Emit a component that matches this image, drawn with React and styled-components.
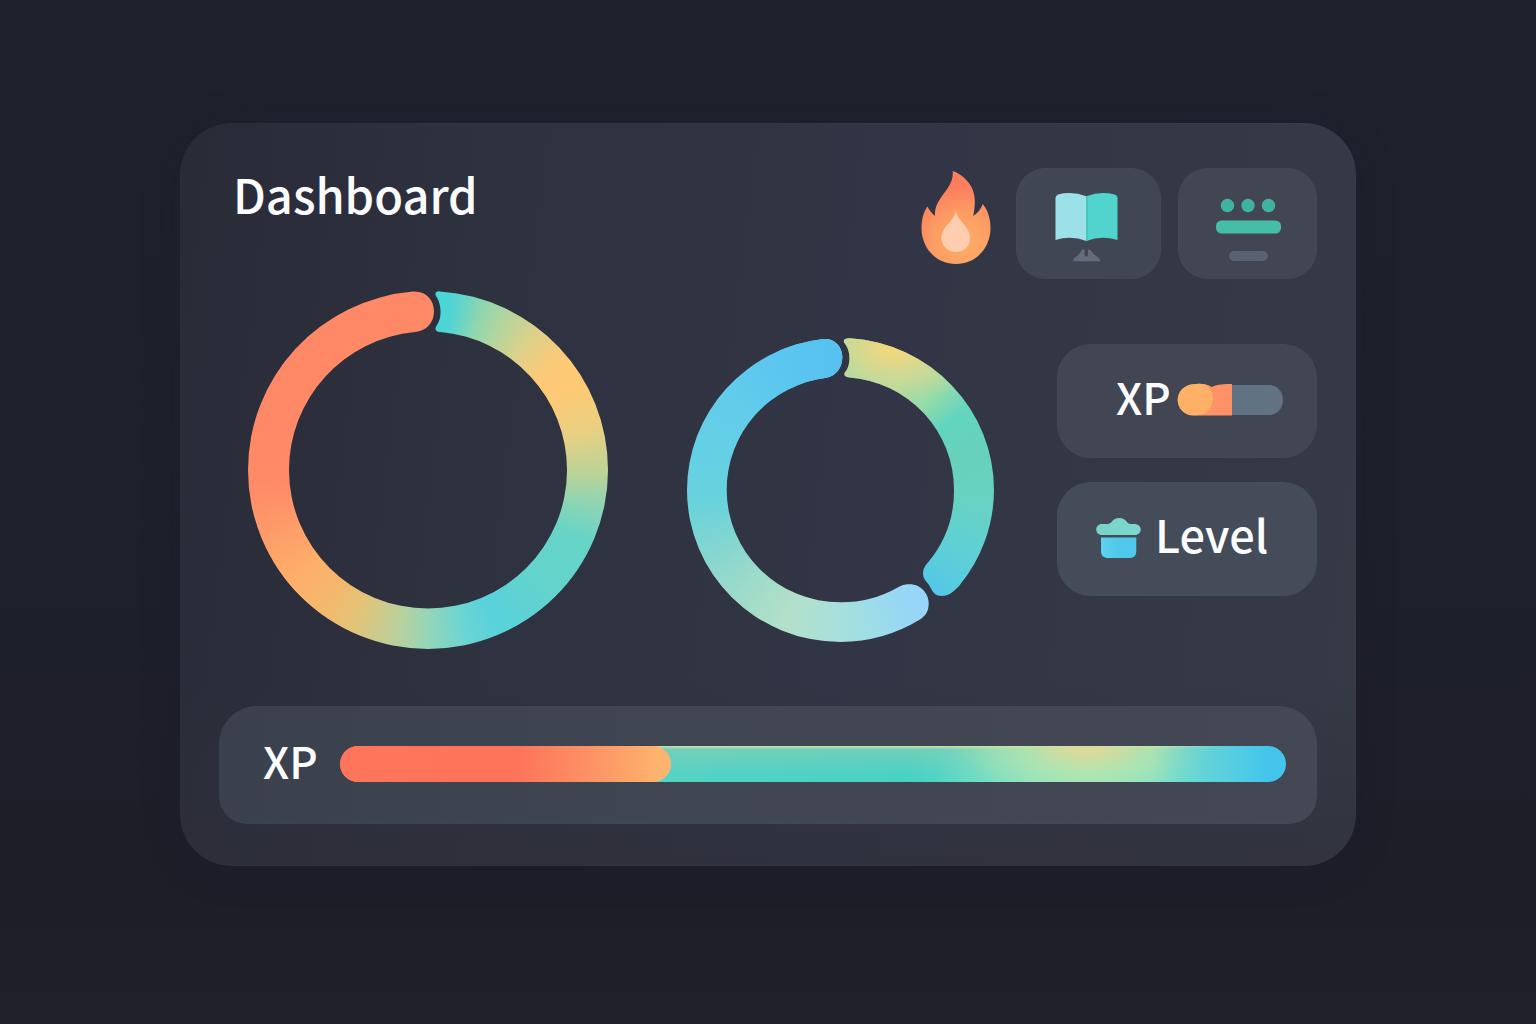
import React from 'react';
import styled, { createGlobalStyle } from 'styled-components'

const GlobalStyle = createGlobalStyle`
	* {
		box-sizing: border-box;
	}

	body {
		margin: 0;
		background: #1f212b;
		color: #fbfcff;
		font-family: "Noto Sans CJK SC", "Noto Sans", sans-serif;
		font-weight: 500;
	}
`

const Page = styled.main`
	min-height: 100vh;
	padding: 123px 180px;
	background: linear-gradient(180deg, #1f222d 0%, #1e202b 50%, #1d1e28 88%, #1f202a 100%);
`

const Card = styled.section`
	padding: 45px 39px 42px;
	border-radius: 52px;
	background:
		linear-gradient(180deg, transparent 75%, rgba(46, 46, 56, .6) 100%),
		linear-gradient(97deg, #292c37 0%, #2e313e 25%, #323545 58%, #363a45 100%);
	box-shadow: inset 0 0 0 1px rgba(255, 255, 255, .01), 0 4px 40px rgba(26, 24, 36, .2);
`

const Header = styled.header`
	display: flex;
	align-items: flex-start;
	justify-content: space-between;
	padding-left: 14px;
`

const Title = styled.h1`
	margin: 0;
	font-size: 47px;
	font-weight: 500;
	line-height: 52px;
`

const Actions = styled.div`
	display: flex;
	gap: 17px;
`

const Streak = styled.div`
	margin-right: 8px;

	& svg {
		display: block;
	}
`

const IconButton = styled.button`
	width: ${({ $width }) => $width}px;
	height: 111px;
	padding: 9px 0 0;
	display: grid;
	place-items: center;
	border: 1px solid rgba(255, 255, 255, .01);
	border-radius: 30px;
	background: ${({ $tone }) => $tone};
	cursor: pointer;
`

const Body = styled.div`
	display: grid;
	grid-template-columns: 360px 1fr 260px;
	align-items: center;
	padding: 12px 0 57px 29px;
`

const RingSlot = styled.div`
	display: flex;
	justify-content: center;
	align-self: ${({ $low }) => $low ? 'end' : 'center'};
	padding: ${({ $low }) => $low ? '0 0 7px 15px' : '0'};

	& svg {
		display: block;
	}
`

const RingPaint = styled.div`
	width: 100%;
	height: 100%;
	background: ${({ $paint }) => $paint};
`

const Side = styled.div`
	display: grid;
	gap: 24px;
`

const Tile = styled.div`
	height: 114px;
	display: flex;
	align-items: center;
	gap: ${({ $gap }) => $gap}px;
	padding: 0 0 2px ${({ $indent }) => $indent}px;
	border: 1px solid rgba(255, 255, 255, .01);
	border-radius: 34px;
	background: ${({ $tone }) => $tone};
`

const Label = styled.span`
	padding-bottom: 9px;
	font-size: ${({ $large }) => $large ? 45 : 44}px;
	line-height: 56px;
	white-space: nowrap;
`

const XpPanel = styled.div`
	height: 118px;
	display: flex;
	align-items: center;
	gap: 22px;
	padding: 0 31px 2px 44px;
	border-radius: 38px 38px 28px 28px;
	background: linear-gradient(90deg, #3b404d 0%, #404552 40%, #444854 100%);
	box-shadow: inset 0 0 0 1px rgba(255, 255, 255, .01);
`

const Track = styled.div`
	flex: 1;
	height: 36px;
	border-radius: 18px;
	overflow: hidden;
	background:
		linear-gradient(90deg, #ff755c 4%, transparent 4% 86%, #57cfe0 94%, #43c5ec 98%),
		linear-gradient(180deg, rgba(203, 226, 165, .8) 0 1px, transparent 3px),
		radial-gradient(130px 52px at 79% 0, rgba(232, 214, 146, 1) 0%, rgba(190, 228, 170, .6) 50%, transparent 100%),
		radial-gradient(150px 80px at 79% 60%, #a2e8bb 0%, rgba(150, 228, 190, .6) 50%, transparent 100%),
		linear-gradient(180deg, rgba(136, 205, 178, .7) 0%, transparent 80%),
		linear-gradient(90deg, #55d3c5 35%, #48d2c5 60%, #70dcc6 72%, #6edccc 90%);
`

const Fill = styled.div`
	height: 100%;
	border-radius: 18px;
	background: linear-gradient(90deg, #ff755c 0%, #fe745b 54%, #fd9466 77%, #feb36e 96%);
`

const BIG_RING = {
	id: 'ring-big',
	width: 360,
	height: 358,
	d: 'M192 .4A180 179 0 0 1 360 179A180 179 0 0 1 0 179A180 179 0 0 1 165 .6C178 0 186 9 186 20.500C186 32 178 40 167 41.100A139 138.500 0 0 0 41 179A139 138.500 0 0 0 319 179A139 138.500 0 0 0 192 41C187 41 186.500 37.500 189 34C194 27 193.500 14 189 6.500C186 2.500 187.500 0 192 .4Z',
	paint: `conic-gradient(from 2.400deg,
		#48d5dc 0deg, #50d4d3 6deg, #8ed6b0 16deg, #b2d5a0 24deg, #dad18b 35deg, #fbca78 47deg, #ffc975 58deg,
		#ead080 73deg, #bad398 89deg, #8cd5b4 100deg, #66d4c6 112deg, #63d3cc 133deg, #58d2db 154deg,
		#6cd5d3 165deg, #92d6b9 177deg, #b9d19d 188deg, #e2c47a 203deg, #f3b96c 214deg, #ffae6a 229deg,
		#fd9e69 244deg, #ff8a67 263deg, #ff8867 308deg, #ff8866 360deg
	)`,
}

// the first layer keeps the yellow glow off the blue end of the ring
const SMALL_RING = {
	id: 'ring-small',
	width: 307,
	height: 304,
	d: 'M163 .3A153.500 152 0 0 1 307 152A153.500 152 0 0 1 272.300 247.700C266 254 262 258 254.700 258C249 258 246 255 244 250.500C241 244 236 242 236 235.500C236 231 238 228 240.300 225.300A113.700 112.600 0 0 0 267 152A113.700 112.600 0 0 0 162 39.400C157 39 156 36 159 33C163.500 27 164 14 158.500 6.500C155 2.500 157 0 163 .3ZM136.300 1C147 0 155.300 8 155.300 19C155.300 30 149 37.500 139.700 39.800A113.700 112.600 0 0 0 39.700 152A113.700 112.600 0 0 0 153.400 264.300A113.700 112.600 0 0 0 210.700 249.500C216 246.500 219 246.300 223 246.300C233 246.300 241.700 255 241.700 265C241.700 273 239 277.500 233 281.500A153.500 152 0 0 1 153.500 304A153.500 152 0 0 1 0 152A153.500 152 0 0 1 136.300 1Z',
	paint: `conic-gradient(from .900deg, transparent 334deg, #5bc6f0 334deg, #56c1ef 360deg),
	radial-gradient(90px 56px at 208px 9px, rgba(250, 214, 120, 1) 0%, rgba(220, 216, 142, .75) 50%, transparent 100%),
	conic-gradient(from .900deg,
		#9cdcab 0deg, #a8dca6 29deg, #98dba9 43deg, #62d5bf 57deg, #68d1ba 74deg, #68d2c3 94deg,
		#5fd1d4 114deg, #53c7e8 137.900deg, #99d4fa 137.900deg, #97d7f5 151deg, #a0dee4 169deg,
		#aae0d8 184deg, #b3e0ca 202deg, #a2dcc9 219deg, #87d6cf 242deg, #68d3dc 264deg, #65d0e5 284deg,
		#62ccea 309deg, #5bc6f0 334deg, #56c1ef 360deg
	)`,
}

const Ring = ({ ring, label }) => (
	<svg width={ring.width} height={ring.height} viewBox={`0 0 ${ring.width} ${ring.height}`} role="img" aria-label={label}>
		<clipPath id={ring.id}>
			<path d={ring.d} />
		</clipPath>
		<g clipPath={`url(#${ring.id})`}>
			<foreignObject width={ring.width} height={ring.height}>
				<RingPaint $paint={ring.paint} />
			</foreignObject>
		</g>
	</svg>
)

const FlameIcon = () => (
	<svg width="70" height="111" viewBox="0 0 70 111" aria-hidden="true">
		<defs>
			<radialGradient id="flame" gradientUnits="userSpaceOnUse" cx="43" cy="76" r="72">
				<stop offset="0" stopColor="#fdae66" />
				<stop offset=".45" stopColor="#fc9c64" />
				<stop offset=".8" stopColor="#fd7d5f" />
				<stop offset="1" stopColor="#fc8061" />
			</radialGradient>
		</defs>
		<path
			fill="url(#flame)"
			d="M31.700 3C39 5 47 12 51 20C55 29 54 38 52.300 48C57 45 60 41 61.700 36C67 42 69.500 51 69.500 60C69.500 80 55 96 35 96C15 96 .5 80 .5 60C.5 52 2.500 44 6.300 38.500C8.500 42.500 11 45.500 14 48C13.500 40 16.500 34.500 21 28C27 20 32.500 14 31.700 3Z"
		/>
		<path fill="#ffceae" d="M35 42.500C36.500 54 49 58 49 70C49 78 43 84 35 84C27 84 20.500 78 20.500 70C20.500 58 33 54 35 42.500Z" />
	</svg>
)

const BookIcon = () => (
	<svg width="70" height="70" viewBox="0 0 70 70" aria-hidden="true">
		<path fill="#9ce1ea" d="M1.500 5Q1.500 2.500 4 1.500Q18 -2 32.500 3.300V48Q17 42 1.500 47Z" />
		<path fill="#50d4cd" d="M32.500 3.300Q46 -2 60.500 1.500Q63.500 2.500 63.500 5V47Q47 42 32.500 48Z" />
		<path fill="#48c9ba" d="M32.200 3.300L34 2.700V47.300L32.200 48Z" />
		<path fill="#656b7b" d="M19.500 68.300V66.500C19.500 64.500 24 64 26.500 59C27.500 56.500 29 56 30.500 56.300V62C30.500 64 34 64 34 62V57C36 56 37.500 57.500 38.500 59.500C40.500 62.500 46 65 46 67V68.300Z" />
	</svg>
)

const ListIcon = () => (
	<svg width="70" height="70" viewBox="0 0 70 70" aria-hidden="true">
		<g fill="#3fb3a1">
			<circle cx="14.500" cy="12.500" r="6.700" />
			<circle cx="35" cy="12.500" r="6.700" />
			<circle cx="55.500" cy="12.500" r="6.700" />
		</g>
		<rect x="3" y="27.500" width="65" height="13" rx="5.500" fill="#46bda6" />
		<rect x="16" y="58" width="39" height="10" rx="5" fill="#5a6172" />
	</svg>
)

const XpPill = () => (
	<svg width="106" height="34" viewBox="0 0 106 34" aria-hidden="true">
		<defs>
			<linearGradient id="pill">
				<stop offset="0" stopColor="#ff9b6c" />
				<stop offset="1" stopColor="#fd9066" />
			</linearGradient>
			<clipPath id="pill-shape">
				<path d="M16 1.300C22 0 30 .5 34.700 4C41 1 48 1 55 1V32.500H16C7 32.500 .7 25 .7 17C.7 9 7 2 16 1.300Z" />
			</clipPath>
		</defs>
		<path fill="#617283" d="M55 2H92C100 2 106 8.500 106 17C106 25.500 100 32 92 32H55Z" />
		<g clipPath="url(#pill-shape)">
			<rect width="56" height="34" fill="url(#pill)" />
			<ellipse cx="18" cy="15.500" rx="18" ry="17" fill="#feb166" />
		</g>
	</svg>
)

const PotIcon = () => (
	<svg width="45" height="41" viewBox="0 0 45 41" aria-hidden="true">
		<defs>
			<linearGradient id="lid">
				<stop offset="0" stopColor="#79d3c6" />
				<stop offset="1" stopColor="#7cd8d1" />
			</linearGradient>
			<linearGradient id="pot">
				<stop offset="0" stopColor="#60d0ee" />
				<stop offset=".5" stopColor="#4fc8ec" />
			</linearGradient>
		</defs>
		<path fill="url(#lid)" d="M5.700 6C10 5.500 13 7 15.500 4C17.500 1.500 20 0 23.300 0C26.500 0 29 1.500 31 4C33 7 36 5.500 39 6C43 6.500 44.700 9 44.700 11.500C44.700 14.700 42 17 39 17H6C2.700 17 .2 14.700 .2 11.500C.2 8.700 2.500 6 5.700 6Z" />
		<path fill="url(#pot)" d="M5 19.500H40.300V33C40.300 37.500 38 40 33.500 40H12C7.500 40 5 37.500 5 33Z" />
	</svg>
)

const XpBar = ({ percent }) => (
	<XpPanel>
		<Label id="xp-label">XP</Label>
		<Track role="progressbar" aria-labelledby="xp-label" aria-valuenow={percent} aria-valuemin={0} aria-valuemax={100}>
			<Fill style={{ width: `${percent}%` }} />
		</Track>
	</XpPanel>
)

const App = () => {
	return (
		<>
			<GlobalStyle />
			<Page>
				<Card>
					<Header>
						<Title>Dashboard</Title>
						<Actions>
							<Streak>
								<FlameIcon />
							</Streak>
							<IconButton type="button" aria-label="Library" $width={145} $tone="#404753">
								<BookIcon />
							</IconButton>
							<IconButton type="button" aria-label="Tasks" $width={139} $tone="#424653">
								<ListIcon />
							</IconButton>
						</Actions>
					</Header>
					<Body>
						<RingSlot>
							<Ring ring={BIG_RING} label="Overall progress" />
						</RingSlot>
						<RingSlot $low>
							<Ring ring={SMALL_RING} label="Weekly progress" />
						</RingSlot>
						<Side>
							<Tile $tone="#424653" $indent={58} $gap={6}>
								<Label>XP</Label>
								<XpPill />
							</Tile>
							<Tile $tone="#434c58" $indent={38} $gap={14}>
								<PotIcon />
								<Label $large>Level</Label>
							</Tile>
						</Side>
					</Body>
					<XpBar percent={35} />
				</Card>
			</Page>
		</>
	)
}

export default App;
